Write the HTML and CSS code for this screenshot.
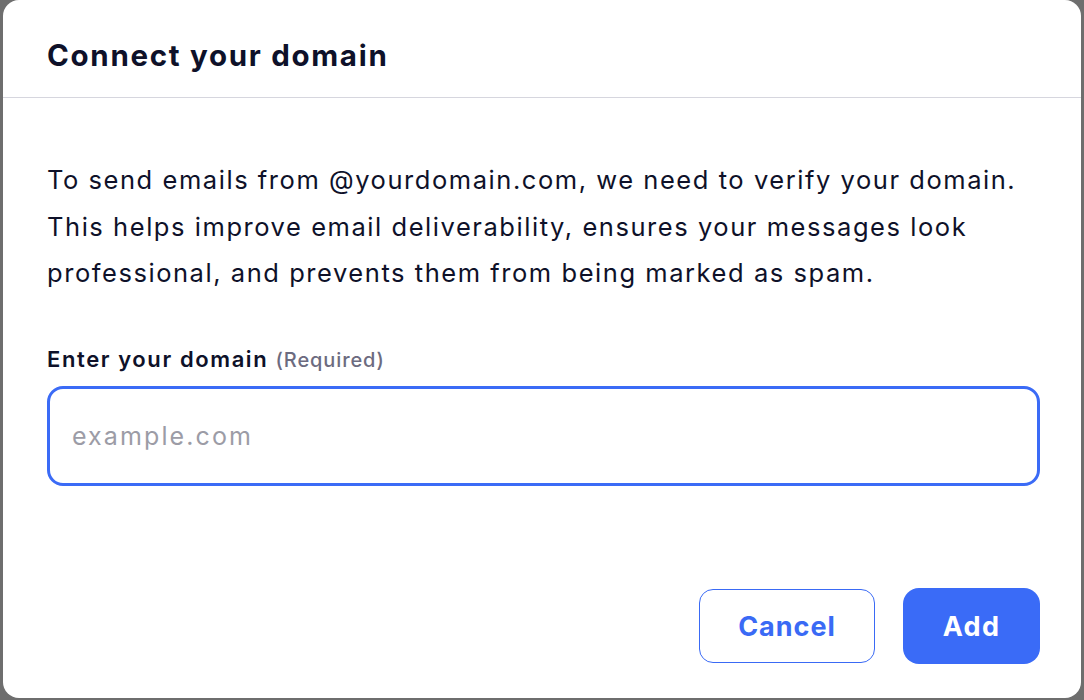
FILE: index.html
```html
<!DOCTYPE html>
<html>
<head>
<meta charset="utf-8">
<link rel="stylesheet" href="styles.css">
</head>
<body>
<div class="modal">
  <div class="modal-header">
    <h1 class="title">Connect your domain</h1>
  </div>
  <div class="modal-body">
    <p class="desc">To send emails from @yourdomain.com, we need to verify your domain. This helps improve email deliverability, ensures your messages look professional, and prevents them from being marked as spam.</p>
    <label class="label">Enter your domain <span class="req">(Required)</span></label>
    <input class="input" type="text" placeholder="example.com">
  </div>
  <div class="modal-footer">
    <button class="btn btn-outline">Cancel</button>
    <button class="btn btn-primary">Add</button>
  </div>
</div>
</body>
</html>
```
FILE: styles.css
```css
html, body {
  margin: 0;
  padding: 0;
}
body {
  background: #6e6e6e;
  padding: 0 3px 2px 3px;
  font-family: Inter, "Noto Sans", sans-serif;
  color: #0e1129;
  height: 700px;
  box-sizing: border-box;
  overflow: hidden;
}
.modal {
  background: #fff;
  border-radius: 16px;
  height: 698px;
  display: flex;
  flex-direction: column;
}
.modal-header {
  height: 98px;
  border-bottom: 1px solid #d6d6de;
  display: flex;
  align-items: center;
  padding: 0 44px;
  box-sizing: border-box;
}
.title {
  margin: 0;
  font-size: 29.5px;
  font-weight: 700;
  letter-spacing: 1.7px;
  padding-top: 12px;
}
.modal-body {
  padding: 0 41px 0 44px;
  display: flex;
  flex-direction: column;
  flex: 1;
}
.desc {
  margin: 59px 0 0 0;
  font-size: 25.5px;
  line-height: 46.5px;
  letter-spacing: 1.55px;
}
.label {
  margin-top: 49px;
  font-size: 22px;
  font-weight: 600;
  letter-spacing: 1.6px;
}
.req {
  font-size: 20px;
  font-weight: 500;
  color: #6c6b80;
  margin-left: 0;
  letter-spacing: 0.9px;
}
.input {
  margin-top: 14px;
  height: 100px;
  box-sizing: border-box;
  border: 3px solid #3b6bf6;
  border-radius: 16px;
  padding: 0 22px;
  font-family: Inter, sans-serif;
  font-size: 25px;
  letter-spacing: 2.1px;
  outline: none;
}
.input::placeholder {
  color: #9c9ca6;
}
.modal-footer {
  display: flex;
  justify-content: flex-end;
  gap: 28px;
  padding: 0 41px 34px 0;
  align-items: center;
}
.btn {
  font-family: Inter, sans-serif;
  font-size: 27px;
  font-weight: 700;
  cursor: pointer;
}
.btn-outline {
  width: 176px;
  height: 74px;
  background: #fff;
  color: #3a6af5;
  border: 1px solid #3a6af5;
  border-radius: 14px;
  letter-spacing: 1px;
}
.btn-primary {
  width: 137px;
  height: 76px;
  background: #3a6bf7;
  color: #fff;
  border: none;
  border-radius: 16px;
  letter-spacing: 1.3px;
}
```
